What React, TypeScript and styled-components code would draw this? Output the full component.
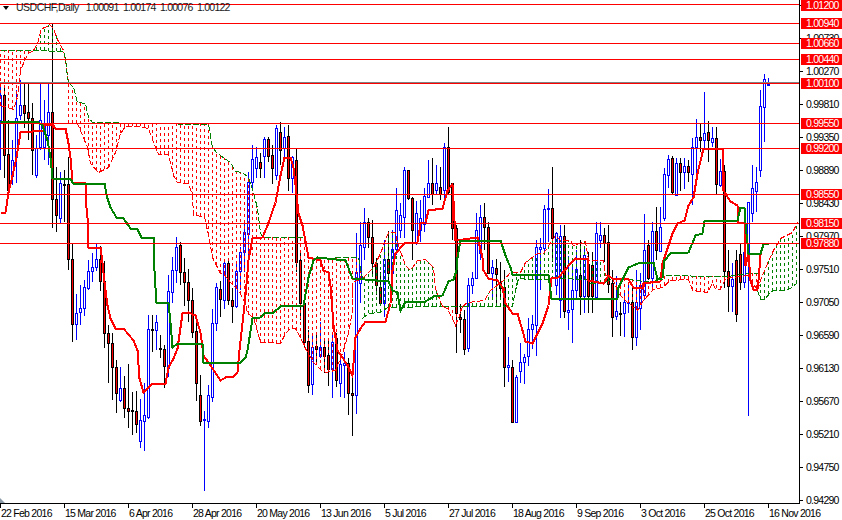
import React from 'react';
import styled, { createGlobalStyle } from 'styled-components';

type Point = [number, number];
// high, body top, body bottom, low (all in pixels), one candle every 4px
type Candle = [string, number, number, number, number];

const CHART_W = 799;
const CHART_H = 503;

const candles: Candle[] = [
  ['u', 85, 95, 120, 170], ['d', 85, 95, 155, 178], ['d', 120, 154, 190, 195], ['u', 140, 160, 176, 185],
  ['u', 90, 118, 157, 183], ['u', 80, 105, 115, 120], ['d', 83, 105, 113, 128], ['d', 83, 112, 118, 140],
  ['d', 103, 118, 150, 175], ['u', 135, 148, 175, 178], ['u', 82, 120, 147, 150], ['u', 100, 125, 147, 160],
  ['u', 82, 112, 135, 165], ['d', 24, 112, 199, 228], ['d', 167, 199, 215, 232], ['u', 172, 183, 218, 223],
  ['d', 170, 184, 185, 222], ['d', 157, 184, 259, 270], ['d', 243, 259, 324, 342], ['u', 294, 313, 324, 340],
  ['u', 285, 308, 312, 325], ['u', 280, 287, 308, 316], ['u', 260, 271, 288, 290], ['u', 253, 267, 271, 282],
  ['u', 244, 259, 267, 271], ['d', 246, 259, 281, 291], ['d', 261, 281, 333, 348], ['d', 325, 333, 343, 383],
  ['d', 333, 343, 367, 400], ['d', 360, 367, 393, 413], ['u', 367, 388, 400, 402], ['d', 376, 388, 408, 418],
  ['d', 364, 408, 411, 428], ['d', 392, 410, 411, 435], ['d', 391, 411, 424, 433], ['u', 399, 420, 441, 448],
  ['u', 383, 415, 421, 451], ['u', 315, 329, 417, 419], ['d', 315, 329, 330, 352], ['u', 315, 322, 330, 350],
  ['d', 335, 348, 349, 358], ['d', 345, 349, 366, 388], ['u', 275, 291, 368, 377], ['u', 257, 270, 292, 303],
  ['u', 237, 247, 270, 283], ['d', 242, 245, 272, 285], ['d', 258, 272, 282, 306], ['d', 269, 282, 300, 322],
  ['d', 288, 300, 332, 338], ['d', 318, 331, 383, 401], ['d', 375, 395, 421, 426], ['u', 411, 419, 420, 491],
  ['u', 385, 395, 421, 428], ['u', 309, 323, 397, 402], ['u', 283, 287, 323, 331], ['d', 281, 289, 299, 317],
  ['u', 261, 263, 300, 309], ['d', 261, 263, 300, 305], ['d', 288, 300, 306, 323], ['u', 262, 271, 306, 308],
  ['u', 247, 252, 271, 290], ['u', 222, 232, 252, 272], ['u', 172, 182, 234, 255], ['u', 145, 159, 182, 190],
  ['u', 147, 157, 168, 178], ['d', 153, 162, 168, 178], ['u', 137, 139, 156, 178], ['d', 137, 139, 156, 162],
  ['d', 145, 155, 168, 184], ['u', 125, 128, 175, 180], ['d', 122, 132, 150, 165], ['u', 127, 137, 148, 157],
  ['d', 125, 136, 178, 191], ['u', 156, 157, 178, 193], ['d', 148, 160, 262, 272], ['d', 253, 260, 303, 320],
  ['d', 295, 303, 342, 347], ['d', 330, 341, 385, 393], ['u', 335, 347, 384, 395], ['d', 335, 346, 349, 365],
  ['u', 322, 347, 356, 358], ['d', 340, 347, 356, 373], ['d', 338, 355, 369, 386], ['u', 332, 342, 369, 398],
  ['d', 333, 338, 380, 387], ['u', 358, 364, 383, 397], ['u', 352, 363, 365, 398], ['d', 358, 363, 393, 415],
  ['d', 377, 393, 395, 436], ['u', 233, 272, 395, 414], ['u', 222, 245, 283, 303], ['u', 208, 222, 247, 260],
  ['d', 218, 222, 237, 248], ['d', 220, 237, 263, 275], ['d', 258, 263, 285, 295], ['d', 272, 287, 303, 305],
  ['u', 240, 259, 303, 317], ['d', 231, 259, 273, 280], ['u', 230, 249, 273, 295], ['u', 188, 210, 249, 255],
  ['u', 203, 215, 230, 238], ['u', 167, 170, 217, 238], ['d', 170, 170, 198, 200], ['d', 197, 198, 230, 260],
  ['u', 201, 213, 242, 245], ['u', 200, 218, 230, 242], ['u', 188, 196, 224, 232], ['u', 160, 183, 197, 198],
  ['d', 158, 183, 194, 205], ['u', 165, 183, 190, 195], ['d', 167, 187, 194, 200], ['u', 143, 147, 190, 200],
  ['d', 127, 147, 192, 195], ['d', 183, 183, 228, 240], ['d', 225, 228, 313, 353], ['d', 304, 317, 319, 333],
  ['d', 310, 319, 349, 355], ['u', 278, 285, 348, 352], ['u', 272, 278, 285, 294], ['u', 213, 230, 278, 278],
  ['u', 205, 217, 253, 260], ['d', 203, 217, 227, 250], ['d', 222, 227, 273, 273], ['u', 260, 267, 273, 298],
  ['d', 259, 268, 274, 303], ['d', 262, 283, 288, 300], ['d', 270, 287, 367, 387], ['u', 337, 365, 367, 382],
  ['d', 360, 367, 422, 423], ['u', 375, 377, 422, 423], ['u', 343, 362, 371, 383], ['u', 354, 357, 362, 384],
  ['u', 318, 329, 356, 366], ['u', 315, 324, 329, 349], ['u', 240, 247, 325, 356], ['u', 238, 247, 249, 290],
  ['u', 205, 209, 248, 255], ['u', 189, 208, 209, 242], ['d', 167, 208, 238, 262], ['u', 232, 233, 285, 295],
  ['u', 225, 236, 300, 318], ['d', 225, 236, 311, 318], ['u', 256, 310, 312, 330], ['u', 265, 290, 309, 343],
  ['u', 250, 269, 290, 300], ['d', 240, 275, 296, 315], ['u', 246, 255, 296, 313], ['d', 252, 264, 296, 313],
  ['d', 252, 265, 296, 313], ['u', 222, 233, 297, 298], ['u', 222, 235, 240, 248], ['d', 228, 235, 243, 262],
  ['d', 225, 242, 284, 293], ['d', 270, 283, 317, 337], ['u', 276, 311, 316, 320], ['d', 302, 313, 314, 336],
  ['u', 290, 302, 313, 337], ['u', 283, 302, 303, 313], ['d', 285, 302, 337, 350], ['u', 270, 302, 337, 346],
  ['u', 273, 285, 308, 330], ['u', 214, 250, 295, 300], ['d', 240, 245, 278, 280], ['u', 222, 231, 278, 288],
  ['d', 207, 231, 250, 260], ['u', 207, 227, 251, 252], ['u', 168, 174, 218, 221], ['u', 155, 159, 175, 188],
  ['d', 156, 158, 192, 195], ['u', 158, 163, 195, 196], ['d', 158, 163, 172, 191], ['u', 158, 166, 172, 189],
  ['d', 160, 166, 172, 182], ['u', 138, 147, 174, 205], ['u', 119, 137, 147, 173], ['d', 123, 137, 140, 152],
  ['u', 92, 133, 140, 150], ['d', 121, 132, 140, 162], ['u', 127, 138, 142, 147], ['d', 127, 138, 184, 194],
  ['u', 159, 171, 185, 187], ['d', 165, 171, 271, 288], ['d', 250, 271, 286, 312], ['u', 263, 279, 286, 312],
  ['d', 250, 260, 314, 322], ['d', 243, 254, 282, 290], ['u', 242, 252, 282, 288], ['u', 202, 202, 252, 416],
  ['u', 165, 188, 213, 222], ['u', 167, 182, 191, 212], ['u', 90, 106, 170, 177], ['u', 74, 79, 107, 142],
  ['u', 78, 84, 85, 86],
];

const conversion: Point[] = [
  [0, 212], [5, 212], [8, 192], [12, 175], [16, 157], [20, 132], [43, 130], [43, 124], [52, 124], [55, 128],
  [65, 128], [68, 143], [70, 157], [72, 182], [85, 183], [85, 198], [87, 217], [88, 247], [100, 247], [102, 262],
  [104, 282], [107, 305], [110, 318], [115, 328], [123, 328], [133, 340], [137, 350], [139, 378], [143, 392],
  [152, 383], [165, 383], [168, 367], [173, 358], [177, 348], [182, 313], [188, 312], [195, 315], [200, 332],
  [203, 355], [210, 365], [220, 380], [227, 376], [233, 376], [237, 372], [239, 350], [245, 295], [248, 260],
  [252, 238], [262, 237], [267, 225], [275, 202], [280, 175], [284, 157], [290, 157], [293, 167], [296, 193],
  [298, 213], [302, 225], [308, 257], [320, 260], [323, 270], [328, 272], [330, 285], [333, 325], [337, 350],
  [342, 357], [348, 367], [352, 375], [355, 337], [360, 328], [365, 321], [385, 321], [390, 303], [392, 270],
  [395, 253], [405, 242], [417, 242], [420, 223], [425, 222], [428, 210], [442, 208], [447, 190], [452, 184],
  [453, 200], [455, 240], [477, 237], [482, 257], [483, 270], [488, 278], [497, 280], [502, 287], [505, 303],
  [512, 313], [517, 313], [522, 330], [525, 341], [532, 343], [542, 323], [548, 305], [550, 287], [551, 278],
  [558, 277], [570, 263], [575, 258], [587, 259], [588, 280], [603, 283], [608, 275], [612, 278], [628, 279],
  [633, 287], [642, 288], [643, 283], [650, 282], [660, 281], [662, 263], [672, 233], [677, 223], [684, 220],
  [688, 205], [693, 197], [697, 173], [703, 148], [722, 148], [723, 190], [730, 201], [737, 205], [738, 222],
  [744, 223], [745, 265], [748, 253], [750, 280], [753, 289], [757, 289], [758, 280], [760, 255], [761, 250],
];

const base: Point[] = [
  [0, 121], [38, 122], [42, 125], [47, 140], [50, 157], [52, 178], [70, 179], [73, 183], [104, 183], [107, 198],
  [110, 207], [116, 217], [123, 218], [130, 228], [137, 229], [141, 237], [153, 237], [153, 253], [155, 287],
  [156, 302], [168, 302], [170, 322], [172, 347], [177, 343], [202, 343], [203, 362], [240, 362], [245, 357],
  [247, 350], [252, 318], [260, 317], [265, 312], [273, 312], [280, 306], [303, 305], [308, 277], [313, 260],
  [317, 257], [345, 260], [352, 278], [388, 281], [392, 290], [397, 292], [400, 310], [405, 301], [425, 301],
  [433, 296], [442, 295], [448, 281], [453, 279], [456, 270], [457, 257], [460, 240], [500, 240], [505, 255],
  [510, 267], [512, 274], [548, 275], [551, 298], [617, 298], [618, 287], [628, 267], [640, 262], [653, 262],
  [657, 279], [662, 278], [664, 260], [670, 253], [688, 252], [695, 235], [702, 233], [704, 221], [737, 220],
  [740, 207], [744, 207], [745, 223], [748, 253], [760, 253], [763, 244], [768, 243],
];

// cloud pieces between the two spans; kind is the colour of the hatching
const clouds: { kind: 'red' | 'green'; top: Point[]; bottom: Point[] }[] = [
  {
    kind: 'red',
    top: [[0, 50], [33, 50]],
    bottom: [[0, 105], [7, 107], [13, 109], [17, 97], [20, 70], [25, 58], [28, 53], [33, 50]],
  },
  {
    kind: 'green',
    top: [[33, 50], [37, 43], [41, 28], [45, 27], [49, 24], [53, 28], [57, 39], [63, 50], [65, 60], [68, 82]],
    bottom: [[33, 50], [63, 51], [65, 58], [67, 77], [68, 82]],
  },
  {
    kind: 'red',
    top: [
      [68, 82], [73, 87], [77, 102], [85, 103], [88, 117], [92, 122], [205, 124], [208, 124], [212, 147], [217, 153],
      [230, 162], [235, 171], [242, 172], [248, 177], [253, 192], [257, 208], [260, 232], [262, 237], [305, 237],
      [308, 258], [358, 257], [362, 278],
    ],
    bottom: [
      [68, 123], [77, 123], [87, 147], [90, 163], [98, 172], [108, 167], [115, 152], [120, 133], [125, 126],
      [138, 126], [148, 128], [155, 147], [158, 154], [168, 154], [173, 175], [177, 182], [188, 183], [192, 195],
      [193, 215], [204, 216], [208, 235], [212, 257], [220, 273], [223, 273], [230, 282], [238, 290], [245, 303],
      [247, 313], [253, 317], [260, 342], [268, 342], [280, 343], [285, 333], [290, 328], [295, 328], [300, 337],
      [305, 348], [313, 362], [320, 369], [325, 372], [335, 370], [342, 353], [348, 333], [352, 310], [352, 282],
      [362, 278],
    ],
  },
  {
    kind: 'green',
    top: [
      [362, 278], [373, 267], [380, 253], [388, 232], [395, 232], [397, 242], [405, 265], [410, 270], [417, 260],
      [425, 259], [433, 267], [435, 288], [442, 306],
    ],
    bottom: [[362, 318], [368, 313], [380, 312], [387, 307], [442, 306]],
  },
  {
    kind: 'red',
    top: [[442, 306], [462, 306]],
    bottom: [[442, 306], [447, 308], [455, 325], [458, 318], [462, 306]],
  },
  {
    kind: 'green',
    top: [
      [462, 306], [467, 302], [484, 300], [490, 290], [503, 280], [510, 272], [520, 272], [525, 262], [537, 253],
      [543, 253], [555, 235], [560, 240], [570, 240], [573, 245], [585, 241], [588, 260], [603, 260], [605, 275],
      [612, 278],
    ],
    bottom: [
      [462, 306], [512, 306], [515, 290], [518, 278], [528, 279], [547, 279], [557, 278], [587, 279], [590, 283],
      [603, 283], [612, 278],
    ],
  },
  {
    kind: 'red',
    top: [
      [612, 278], [628, 279], [652, 282], [663, 275], [717, 276], [727, 276], [747, 273], [757, 273],
    ],
    bottom: [
      [612, 278], [618, 293], [625, 300], [637, 310], [643, 300], [653, 289], [662, 287], [670, 280], [688, 279],
      [692, 290], [707, 292], [712, 283], [715, 288], [720, 289], [725, 278], [747, 275], [752, 282], [757, 290],
    ],
  },
  {
    kind: 'green',
    top: [[757, 290], [760, 280], [767, 263], [773, 250], [780, 238], [792, 232], [797, 222]],
    bottom: [[757, 290], [760, 299], [764, 299], [770, 292], [773, 290], [783, 290], [790, 288], [797, 282]],
  },
];

const levels: [number, string][] = [
  [4, '1.01200'], [23, '1.00940'], [43, '1.00660'], [59, '1.00440'], [83, '1.00100'],
  [123, '0.99550'], [148, '0.99200'], [194, '0.98550'], [223, '0.98150'], [243, '0.97880'],
];

const prices = [
  '1.01190', '1.00730', '1.00270', '0.99810', '0.99350', '0.98890', '0.98430',
  '0.97970', '0.97510', '0.97050', '0.96590', '0.96130', '0.95670', '0.95210', '0.94750', '0.94290',
];

const dates = [
  '22 Feb 2016', '15 Mar 2016', '6 Apr 2016', '28 Apr 2016', '20 May 2016', '13 Jun 2016', '5 Jul 2016',
  '27 Jul 2016', '18 Aug 2016', '9 Sep 2016', '3 Oct 2016', '25 Oct 2016', '16 Nov 2016',
];

const RED = '#ff0000';
const GREEN = '#008000';
const BLUE = '#0000ff';

const toPoints = (line: Point[]) => line.map(([x, y]) => `${x + 0.5},${y + 0.5}`).join(' ');

const yAt = (line: Point[], x: number) => {
  for (let i = 1; i < line.length; i++) {
    const [x0, y0] = line[i - 1];
    const [x1, y1] = line[i];
    if (x >= x0 && x <= x1) return x1 === x0 ? y1 : y0 + ((y1 - y0) * (x - x0)) / (x1 - x0);
  }
  return null;
};

const Hatching = () => (
  <>
    {clouds.map((cloud, c) => {
      const color = cloud.kind === 'red' ? RED : GREEN;
      const edgeTop = cloud.kind === 'red' ? GREEN : RED;
      const edgeBottom = cloud.kind === 'red' ? RED : GREEN;
      const bars = [];
      for (let x = 0; x < CHART_W; x += 4) {
        const top = yAt(cloud.top, x);
        const bottom = yAt(cloud.bottom, x);
        if (top === null || bottom === null || bottom - top < 2) continue;
        // dots are counted from the bottom of the bar, as the terminal draws them
        bars.push(
          <line key={x} x1={x + 0.5} x2={x + 0.5} y1={Math.round(bottom)} y2={Math.round(top)} stroke={color} strokeDasharray="3 3" />
        );
      }
      return (
        <g key={c}>
          {bars}
          <polyline points={toPoints(cloud.top)} fill="none" stroke={edgeTop} strokeDasharray="6 2" />
          <polyline points={toPoints(cloud.bottom)} fill="none" stroke={edgeBottom} strokeDasharray="6 2" />
        </g>
      );
    })}
  </>
);

const Candles = () => (
  <>
    {candles.map(([dir, high, top, bottom, low], i) => {
      const x = i * 4;
      const up = dir === 'u';
      const color = up ? BLUE : '#000';
      return (
        <g key={i}>
          <line x1={x + 0.5} x2={x + 0.5} y1={high} y2={low} stroke={color} />
          <rect x={x - 0.5} y={top + 0.5} width={2} height={Math.max(bottom - top, 1)} fill={up ? '#fff' : RED} stroke={color} />
        </g>
      );
    })}
  </>
);

const GlobalStyle = createGlobalStyle`
  html, body {
    margin: 0;
    background: #fff;
  }
`;

const Terminal = styled.div`
  width: 842px;
  height: 520px;
  overflow: hidden;
  background: #fff;
  color: #000;
  font-family: 'Liberation Sans', Arial, sans-serif;
  font-size: 10.5px;
  letter-spacing: -0.75px;
`;

const ChartRow = styled.div`
  display: flex;
  height: ${CHART_H}px;
`;

const Chart = styled.div`
  position: relative;
  width: ${CHART_W}px;
  height: ${CHART_H}px;
`;

const Plot = styled.svg`
  display: block;
  shape-rendering: crispEdges;
`;

const Legend = styled.div`
  position: absolute;
  top: 2px;
  left: 3px;
  display: flex;
  align-items: center;
  white-space: pre;
  line-height: 11px;
  color: #1a1a1a;
`;

const LegendArrow = styled.span`
  width: 0;
  height: 0;
  margin-right: 7px;
  border: 3px solid transparent;
  border-top: 4px solid #000;
  border-bottom: 0;
`;

const Symbol = styled.span`
  margin-right: 7px;
  letter-spacing: -0.5px;
`;

const Shift = styled.div`
  position: absolute;
  left: 0;
  bottom: 0;
  width: 0;
  height: 0;
  border-bottom: 5px solid #8c9aa8;
  border-right: 5px solid transparent;
`;

const PriceAxis = styled.div`
  position: relative;
  flex: 1;
  border-left: 1px solid #000;
`;

const PriceList = styled.div`
  display: flex;
  flex-direction: column;
  margin-top: -11px;
`;

const PriceRow = styled.div`
  display: flex;
  align-items: center;
  gap: 3px;
  height: 32.97px;
`;

const PriceTick = styled.span`
  width: 3px;
  height: 1px;
  background: #000;
`;

const LevelTag = styled.div<{ $y: number }>`
  position: absolute;
  top: ${(p) => Math.max(p.$y - 5, 0)}px;
  left: 1px;
  right: 0;
  height: 11px;
  padding-left: 5px;
  line-height: 11px;
  background: ${RED};
  color: #fff;
`;

const TimeAxis = styled.div`
  display: flex;
  border-top: 1px solid #000;
  width: ${CHART_W + 1}px;
`;

const TimeCell = styled.div`
  flex: 0 0 64px;
  white-space: nowrap;
`;

const TimeTick = styled.div`
  width: 1px;
  height: 4px;
  background: #000;
`;

const TimeLabel = styled.div`
  padding-left: 1px;
  line-height: 11px;
`;

export default function App() {
  return (
    <Terminal>
      <GlobalStyle />
      <ChartRow>
        <Chart>
          <Plot width={CHART_W} height={CHART_H} viewBox={`0 0 ${CHART_W} ${CHART_H}`}>
            <Candles />
            <Hatching />
            <polyline points={toPoints(conversion)} fill="none" stroke={RED} strokeWidth={2} />
            <polyline points={toPoints(base)} fill="none" stroke={GREEN} strokeWidth={2} />
            <line x1={0} x2={CHART_W} y1={82.5} y2={82.5} stroke="#808080" />
            {levels.map(([y]) => (
              <line key={y} x1={0} x2={CHART_W} y1={y + 0.5} y2={y + 0.5} stroke={RED} />
            ))}
          </Plot>
          <Legend>
            <LegendArrow />
            <Symbol>USDCHF,Daily</Symbol>
            {'1.00091  1.00174  1.00076  1.00122'}
          </Legend>
          <Shift />
        </Chart>
        <PriceAxis>
          <PriceList>
            {prices.map((p) => (
              <PriceRow key={p}>
                <PriceTick />
                {p}
              </PriceRow>
            ))}
          </PriceList>
          {levels.map(([y, label]) => (
            <LevelTag key={y} $y={y}>
              {label}
            </LevelTag>
          ))}
        </PriceAxis>
      </ChartRow>
      <TimeAxis>
        {dates.map((d) => (
          <TimeCell key={d}>
            <TimeTick />
            <TimeLabel>{d}</TimeLabel>
          </TimeCell>
        ))}
      </TimeAxis>
    </Terminal>
  );
}
